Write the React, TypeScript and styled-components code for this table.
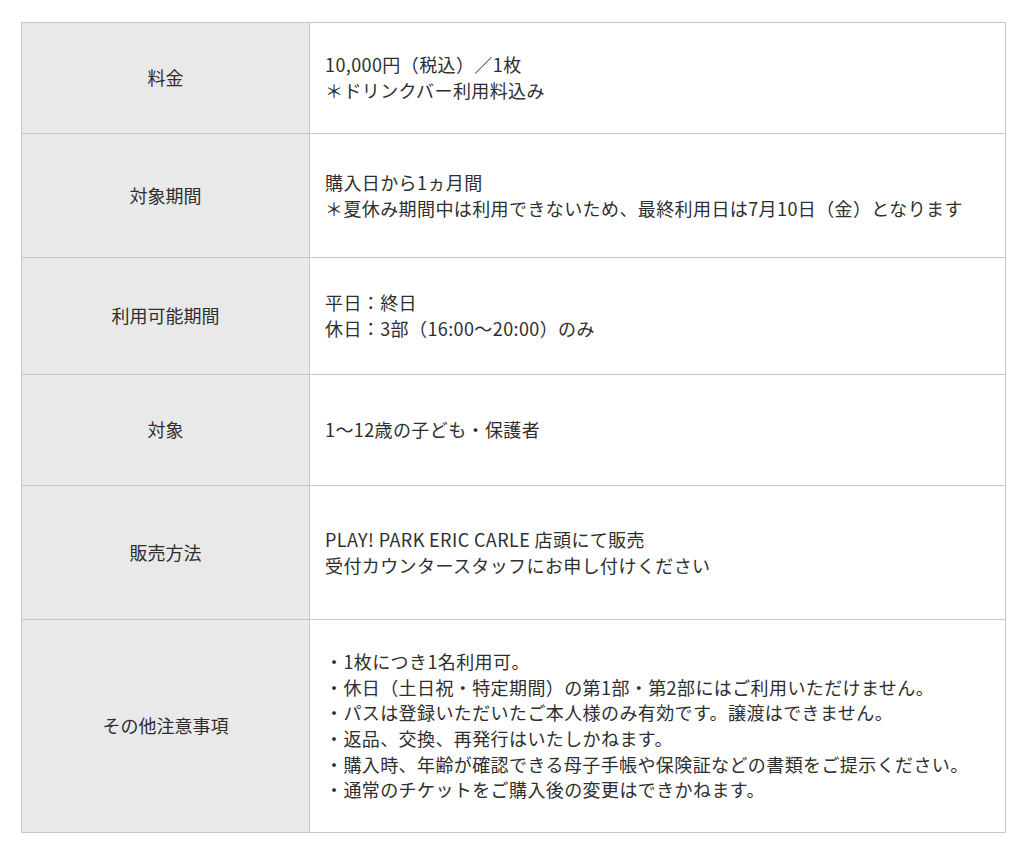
import React from "react";
import styled, { createGlobalStyle } from "styled-components";

const GlobalStyle = createGlobalStyle`
  html, body {
    margin: 0;
    padding: 0;
    background: #ffffff;
  }
  body {
    font-family: "Noto Sans CJK JP", "Noto Sans", sans-serif;
    color: #333333;
  }
`;

const Page = styled.div`
  padding: 22px 18px 0 21px;
`;

const Table = styled.table`
  width: 985px;
  border-collapse: collapse;
  table-layout: fixed;
  font-size: 18px;
  line-height: 25.6px;
`;

const Row = styled.tr<{ $h: number }>`
  height: ${(p) => p.$h}px;
`;

const Label = styled.th`
  width: 267px;
  background: #e9e9e9;
  border: 1px solid #c8c8c8;
  font-weight: 400;
  text-align: center;
  vertical-align: middle;
  padding: 0 10px;
  color: #2e2e2e;
`;

const Cell = styled.td`
  background: #ffffff;
  border: 1px solid #c8c8c8;
  text-align: left;
  vertical-align: middle;
  padding: 0 15px;
  color: #2e2e2e;
  letter-spacing: 0.4px;
`;

const Line = styled.div`
  white-space: nowrap;
`;

const rows: { label: string; h: number; lines: string[] }[] = [
  { label: "料金", h: 111, lines: ["10,000円（税込）／1枚", "＊ドリンクバー利用料込み"] },
  {
    label: "対象期間",
    h: 124,
    lines: ["購入日から1ヵ月間", "＊夏休み期間中は利用できないため、最終利用日は7月10日（金）となります"],
  },
  { label: "利用可能期間", h: 117, lines: ["平日：終日", "休日：3部（16:00〜20:00）のみ"] },
  { label: "対象", h: 111, lines: ["1〜12歳の子ども・保護者"] },
  {
    label: "販売方法",
    h: 134,
    lines: ["PLAY! PARK ERIC CARLE 店頭にて販売", "受付カウンタースタッフにお申し付けください"],
  },
  {
    label: "その他注意事項",
    h: 213,
    lines: [
      "・1枚につき1名利用可。",
      "・休日（土日祝・特定期間）の第1部・第2部にはご利用いただけません。",
      "・パスは登録いただいたご本人様のみ有効です。譲渡はできません。",
      "・返品、交換、再発行はいたしかねます。",
      "・購入時、年齢が確認できる母子手帳や保険証などの書類をご提示ください。",
      "・通常のチケットをご購入後の変更はできかねます。",
    ],
  },
];

export default function App() {
  return (
    <Page>
      <GlobalStyle />
      <Table>
        <tbody>
          {rows.map((r) => (
            <Row key={r.label} $h={r.h}>
              <Label>{r.label}</Label>
              <Cell>
                {r.lines.map((l) => (
                  <Line key={l}>{l}</Line>
                ))}
              </Cell>
            </Row>
          ))}
        </tbody>
      </Table>
    </Page>
  );
}
